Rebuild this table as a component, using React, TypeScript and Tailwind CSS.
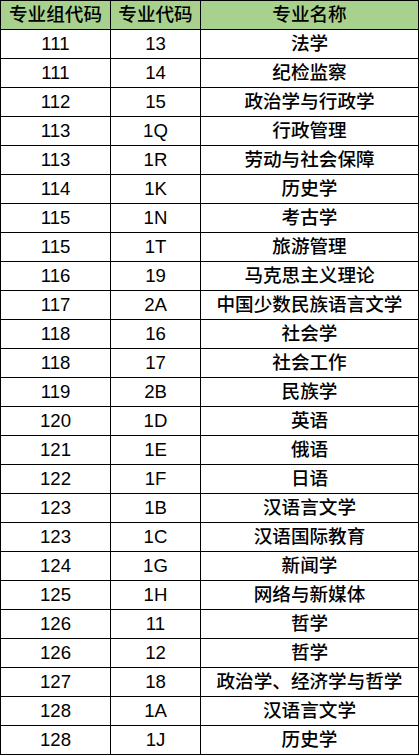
import React from "react";

const rows: [string, string, string][] = [
  ["111", "13", "法学"],
  ["111", "14", "纪检监察"],
  ["112", "15", "政治学与行政学"],
  ["113", "1Q", "行政管理"],
  ["113", "1R", "劳动与社会保障"],
  ["114", "1K", "历史学"],
  ["115", "1N", "考古学"],
  ["115", "1T", "旅游管理"],
  ["116", "19", "马克思主义理论"],
  ["117", "2A", "中国少数民族语言文学"],
  ["118", "16", "社会学"],
  ["118", "17", "社会工作"],
  ["119", "2B", "民族学"],
  ["120", "1D", "英语"],
  ["121", "1E", "俄语"],
  ["122", "1F", "日语"],
  ["123", "1B", "汉语言文学"],
  ["123", "1C", "汉语国际教育"],
  ["124", "1G", "新闻学"],
  ["125", "1H", "网络与新媒体"],
  ["126", "11", "哲学"],
  ["126", "12", "哲学"],
  ["127", "18", "政治学、经济学与哲学"],
  ["128", "1A", "汉语言文学"],
  ["128", "1J", "历史学"],
];

export default function App() {
  return (
    <div
      className="w-[419px] bg-white text-[18.6px] font-medium leading-none text-black"
      style={{ fontFamily: '"Liberation Sans", "Noto Sans CJK SC", sans-serif' }}
    >
      <div className="border-t border-l border-r border-black">
        <div className="grid grid-cols-[110px_90px_1fr] bg-[#a9d18e] border-b border-black h-[29px]">
          <div className="flex items-center justify-center border-r border-black">专业组代码</div>
          <div className="flex items-center justify-center border-r border-black">专业代码</div>
          <div className="flex items-center justify-center">专业名称</div>
        </div>
        {rows.map((r, i) => (
          <div key={i} className="grid grid-cols-[110px_90px_1fr] border-b border-black h-[29px]">
            <div className="flex items-center justify-center border-r border-black">{r[0]}</div>
            <div className="flex items-center justify-center border-r border-black">{r[1]}</div>
            <div className="flex items-center justify-center">{r[2]}</div>
          </div>
        ))}
      </div>
    </div>
  );
}
